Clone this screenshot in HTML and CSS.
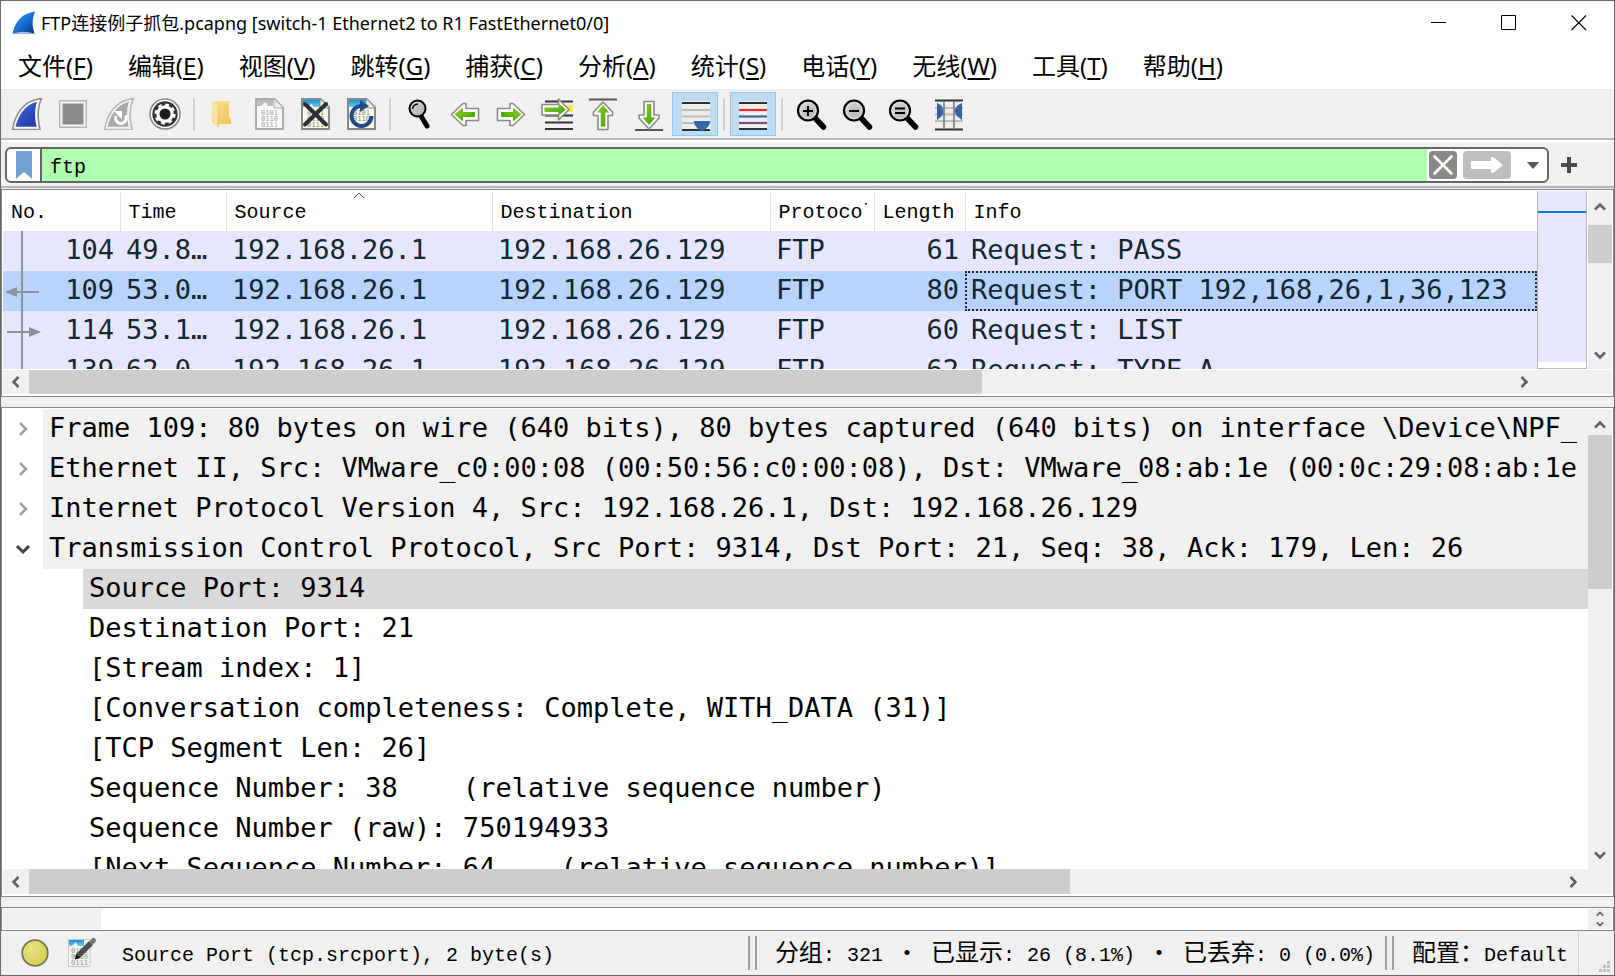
FILE: index.html
```html
<!DOCTYPE html>
<html lang="zh-CN">
<head>
<meta charset="utf-8">
<title>FTP连接例子抓包.pcapng</title>
<link rel="stylesheet" href="styles.css">
</head>
<body>
<svg class="defs" width="0" height="0" aria-hidden="true">
  <defs>
    <linearGradient id="gFin" x1="0" y1="0" x2="1" y2="1"><stop offset="0" stop-color="#4a6ee0"/><stop offset=".6" stop-color="#2a48bf"/><stop offset="1" stop-color="#2439a8"/></linearGradient>
    <linearGradient id="gLogo" x1="0" y1="0" x2="1" y2="1"><stop offset="0" stop-color="#2fa0ee"/><stop offset=".5" stop-color="#1a73d6"/><stop offset="1" stop-color="#072a72"/></linearGradient>
    <linearGradient id="gGreen" x1="0" y1="0" x2="1" y2="1"><stop offset="0" stop-color="#8ad02c"/><stop offset="1" stop-color="#3f9c00"/></linearGradient>
    <linearGradient id="gFold" x1="0" y1="0" x2="1" y2="1"><stop offset="0" stop-color="#fbe49a"/><stop offset="1" stop-color="#efc258"/></linearGradient>
    <linearGradient id="gSky" x1="0" y1="0" x2="0" y2="1"><stop offset="0" stop-color="#1b93d8"/><stop offset="1" stop-color="#6fc4ee"/></linearGradient>
    <linearGradient id="gLens" x1="0" y1="0" x2="1" y2="1"><stop offset="0" stop-color="#d8d8d8"/><stop offset="1" stop-color="#b0b0b0"/></linearGradient>
    <radialGradient id="gLed" cx=".4" cy=".35" r=".8"><stop offset="0" stop-color="#e6e28a"/><stop offset="1" stop-color="#d2cf3c"/></radialGradient>
    <symbol id="fin" viewBox="0 0 32 32"><path d="M1.5 31.5C4 17 12 2.500 30.500.5 26.500 9 26 19 29 31.500Z"/></symbol>
    <symbol id="arrow" viewBox="0 0 32 32">
      <path d="M2.500 16.500 14 5.500H17V10.500H29.500V22.500H17V27.500H14Z" fill="#fff" stroke="#888a85" stroke-width="1.600" stroke-linejoin="round"/>
      <path d="M5.500 16.500 14 9.500V14H26V19H14V23.500Z" fill="url(#gGreen)"/>
    </symbol>
    <symbol id="lens" viewBox="0 0 32 32">
      <path d="M21 21 28.500 29" stroke="#000" stroke-width="5.500" stroke-linecap="round"/>
      <circle cx="13" cy="12.500" r="10" fill="url(#gLens)" stroke="#000" stroke-width="2.200"/>
      <circle cx="13" cy="12.500" r="8" fill="none" stroke="#e4e4e4" stroke-width="1"/>
    </symbol>
    <symbol id="up" viewBox="0 0 16 16"><path d="M3 10.500 8 5.500 13 10.500" fill="none" stroke="#606060" stroke-width="2.600"/></symbol>
    <symbol id="down" viewBox="0 0 16 16"><path d="M3 5.500 8 10.500 13 5.500" fill="none" stroke="#606060" stroke-width="2.600"/></symbol>
    <symbol id="left" viewBox="0 0 16 16"><path d="M10.500 3 5.500 8 10.500 13" fill="none" stroke="#606060" stroke-width="2.600"/></symbol>
    <symbol id="right" viewBox="0 0 16 16"><path d="M5.500 3 10.500 8 5.500 13" fill="none" stroke="#606060" stroke-width="2.600"/></symbol>
  </defs>
</svg>

<header class="titlebar">
  <svg class="logo" viewBox="0 0 24 24" aria-hidden="true"><path d="M.5 22.500C3 11 10 2 23 .5 20 8 20 15 22.500 22.500Z" fill="url(#gLogo)"/><path d="M1 22.500Q12 19 22 22.500Z" fill="#a8c4ee"/></svg>
  <h1 class="title">FTP连接例子抓包.pcapng [switch-1 Ethernet2 to R1 FastEthernet0/0]</h1>
  <div class="winbtns">
    <button aria-label="最小化"><svg viewBox="0 0 16 16"><path d="M0 7.500H15" stroke="#000" stroke-width="1"/></svg></button>
    <button aria-label="最大化"><svg viewBox="0 0 16 16"><path d="M.5.5H14.500V14.500H.5Z" fill="none" stroke="#000"/></svg></button>
    <button aria-label="关闭"><svg viewBox="0 0 16 16"><path d="M.5.5 15 15M15 .5.5 15" stroke="#000" stroke-width="1.100"/></svg></button>
  </div>
</header>

<nav class="menubar">
  <button>文件(<u>F</u>)</button><button>编辑(<u>E</u>)</button><button>视图(<u>V</u>)</button><button>跳转(<u>G</u>)</button><button>捕获(<u>C</u>)</button><button>分析(<u>A</u>)</button><button>统计(<u>S</u>)</button><button>电话(<u>Y</u>)</button><button>无线(<u>W</u>)</button><button>工具(<u>T</u>)</button><button>帮助(<u>H</u>)</button>
</nav>

<div class="toolbar">
  <button aria-label="开始捕获"><svg viewBox="0 0 32 32"><use href="#fin" fill="#fff" stroke="#8c8c8c" stroke-width="1.600"/><path d="M4.500 28.800C7 18 14 6.500 26 3.800 23.500 11 23.500 20 25.700 28.800Z" fill="url(#gFin)"/></svg></button>
  <button aria-label="停止捕获"><svg viewBox="0 0 32 32"><path d="M2.700 2.700H29.300V29.300H2.700Z" fill="#f6f6f6" stroke="#b4b4b4" stroke-width="1.400"/><path d="M5.500 5.500H26.500V26.500H5.500Z" fill="#8c8c8c"/></svg></button>
  <button aria-label="重新开始捕获"><svg viewBox="0 0 32 32"><use href="#fin" fill="#f4f4f4" stroke="#b8b8b8" stroke-width="1.600"/><path d="M4.500 28.800C7 18 14 6.500 26 3.800 23.500 11 23.500 20 25.700 28.800Z" fill="#a9a9a9"/><path d="M13 18A5.300 5.300 0 1 0 22.500 17.500" fill="none" stroke="#fff" stroke-width="3"/><path d="M11 13H19V21L15.500 18Z" fill="#fff"/></svg></button>
  <button aria-label="捕获选项"><svg viewBox="0 0 32 32"><circle cx="16" cy="16" r="15" fill="#fff" stroke="#8a8a8a" stroke-width="1.600"/><circle cx="16" cy="16" r="12.700" fill="#333"/><circle cx="16" cy="16" r="8.700" fill="#fff"/><circle cx="16" cy="16" r="9.200" fill="none" stroke="#fff" stroke-width="2.800" stroke-dasharray="3.600 3.625"/><circle cx="16" cy="16" r="5.500" fill="#1c1c1c"/></svg></button>
  <span class="sep"></span>
  <button aria-label="打开"><svg viewBox="0 0 32 32"><path d="M5 3H22V17.500L24 22V26H11L5 25Z" fill="url(#gFold)"/><path d="M5 3 11.500 7.500V29.500L6 26Z" fill="#fbe29c"/><path d="M11.500 7.500V29" stroke="#e2b95a" stroke-width=".6"/></svg></button>
  <button aria-label="保存"><svg viewBox="0 0 32 32"><path d="M3 1H21.500L30 9.500V31H3Z" fill="#fafafa" stroke="#acacac" stroke-width="2"/><path d="M4 2H20V8H15L12.500 4 8 8H4Z" fill="#bcbcbc"/><path d="M21 1V10H30" fill="#eee" stroke="#acacac"/><g class="bits" fill="#a8a8a8"><text x="8" y="17">0101</text><text x="8" y="23">0110</text><text x="8" y="29">0111</text></g></svg></button>
  <button aria-label="关闭文件"><svg viewBox="0 0 32 32"><path d="M3 1H21.500L30 9.500V31H3Z" fill="#fdfbe9" stroke="#888a85" stroke-width="2"/><path d="M4 2H21V9H15L12.500 6 8 9H4Z" fill="url(#gSky)"/><path d="M21 1V10H30" fill="#eee" stroke="#888a85"/><g class="bits" fill="#8c8c88"><text x="8" y="17">0101</text><text x="8" y="23">0110</text><text x="8" y="29">0111</text></g><path d="M6 6 27 26.500M27 6 6 26.500" stroke="#2a3033" stroke-width="4" stroke-linecap="round"/></svg></button>
  <button aria-label="重新载入"><svg viewBox="0 0 32 32"><path d="M3 1H21.500L30 9.500V31H3Z" fill="#fdfbe9" stroke="#888a85" stroke-width="2"/><path d="M4 2H21V9H4Z" fill="url(#gSky)"/><path d="M21 1V10H30" fill="#eee" stroke="#888a85"/><g class="bits" fill="#8c8c88"><text x="8" y="17">0101</text><text x="8" y="23">0110</text></g><path d="M17 8A10 10 0 1 0 26.500 18" fill="none" stroke="#204a87" stroke-width="4"/><path d="M15 2 24 8 15 14Z" fill="#204a87"/></svg></button>
  <span class="sep"></span>
  <button aria-label="查找分组"><svg viewBox="0 0 32 32"><path d="M18 18 24 28" stroke="#000" stroke-width="5" stroke-linecap="round"/><circle cx="14.500" cy="10.500" r="8" fill="url(#gLens)" stroke="#000" stroke-width="2"/><path d="M9.500 11Q10 6.500 15 6" fill="none" stroke="#000" stroke-width="1.300"/></svg></button>
  <button aria-label="后退"><svg viewBox="0 0 32 32"><use href="#arrow"/></svg></button>
  <button aria-label="前进"><svg viewBox="0 0 32 32"><use href="#arrow" transform="translate(32 0) scale(-1 1)"/></svg></button>
  <button aria-label="转到分组"><svg viewBox="0 0 32 32"><path d="M4 3.500H32M4 24.500H32M4 31H32M4 17.500H32" stroke="#2e3436" stroke-width="2.200"/><path d="M24 7H32V14H24Z" fill="#fce94f"/><path d="M28 11.500 17.500 1V6.500H1V17H17.500V22Z" fill="#fff" stroke="#888a85" stroke-width="1.600" stroke-linejoin="round"/><path d="M25 11.500 17.500 5.500V9.500H3.500V14H17.500V17.500Z" fill="url(#gGreen)"/></svg></button>
  <button aria-label="首个分组"><svg viewBox="0 0 32 32"><path d="M2 1.500H30" stroke="#555753" stroke-width="2"/><path d="M16 4 25.500 14V17.500H21V31.500H11V17.500H6.500V14Z" fill="#fff" stroke="#888a85" stroke-width="1.600" stroke-linejoin="round"/><path d="M16 7 22 14.500H18.300V28.500H13.700V14.500H10Z" fill="url(#gGreen)"/></svg></button>
  <button aria-label="最新分组"><svg viewBox="0 0 32 32"><path d="M2 32H30" stroke="#555753" stroke-width="2"/><path d="M16 31 26 20V17H21V3.500H11V17H6V20Z" fill="#fff" stroke="#888a85" stroke-width="1.600" stroke-linejoin="round"/><path d="M16 27 22.500 19.500H18.300V6H13.700V19.500H9.500Z" fill="url(#gGreen)"/></svg></button>
  <button class="on" aria-label="自动滚动" aria-pressed="true"><svg viewBox="0 0 32 32"><path d="M3 3H31V33H3Z" fill="#eeeeec"/><path d="M3 5H31M3 32H31" stroke="#2e3436" stroke-width="2.200"/><path d="M3 12H31M3 18.500H31M3 25H31" stroke="#babdb6" stroke-width="2"/><path d="M15 23H31C31 27 28 31 23 33 18 31 15 27 15 23Z" fill="#3465a4"/></svg></button>
  <span class="sep"></span>
  <button class="on" aria-label="着色" aria-pressed="true"><svg viewBox="0 0 32 32"><path d="M2 3H30V32H2Z" fill="#eeeeec"/><path d="M2 5H30M2 31H30" stroke="#2e3436" stroke-width="2.200"/><path d="M2 12H30" stroke="#ef2929" stroke-width="2.200"/><path d="M2 18.500H30" stroke="#3465a4" stroke-width="2.200"/><path d="M2 25H30" stroke="#75507b" stroke-width="2.200"/></svg></button>
  <span class="sep"></span>
  <button aria-label="放大"><svg viewBox="0 0 32 32"><use href="#lens"/><path d="M8 13H18M13 8V18" stroke="#000" stroke-width="2"/></svg></button>
  <button aria-label="缩小"><svg viewBox="0 0 32 32"><use href="#lens"/><path d="M8 13H18" stroke="#000" stroke-width="2"/></svg></button>
  <button aria-label="正常大小"><svg viewBox="0 0 32 32"><use href="#lens"/><path d="M8 10.500H18M8 15H18" stroke="#000" stroke-width="2"/></svg></button>
  <button aria-label="调整列宽"><svg viewBox="0 0 32 32"><path d="M2 3H30V31H2Z" fill="#eeeeec"/><path d="M2 10H30M2 16.500H30M2 23H30" stroke="#babdb6" stroke-width="2"/><path d="M2 2.500H30M2 31.500H30" stroke="#2e3436" stroke-width="2.200"/><path d="M11 3V31M21 3V31" stroke="#777a75" stroke-width="1.600"/><path d="M4 5 8.500 7.500Q12 13 8.500 18.500L4 22Z M29 5 24.500 7.500Q19 13 24.500 18.500L29 22Z" fill="#3465a4"/></svg></button>
</div>

<div class="filterbar">
  <div class="filter">
    <button class="mark" aria-label="书签"><svg viewBox="0 0 16 28"><path d="M0 1Q0 0 1 0H15Q16 0 16 1V28L8 21 0 28Z" fill="#729fcf"/></svg></button>
    <input class="ftext" type="text" value="ftp" aria-label="显示过滤器">
    <button class="clear" aria-label="清除"><svg viewBox="0 0 28 28"><path d="M5.500 5.500 22.500 22.500M22.500 5.500 5.500 22.500" stroke="#fff" stroke-width="2.600" stroke-linecap="round"/></svg></button>
    <button class="apply" aria-label="应用"><svg viewBox="0 0 48 28"><path d="M9 10H28V6L31 6.500 40 14 31 21.500 28 22V18H9Q8 18 8 17V11Q8 10 9 10Z" fill="#fff"/></svg></button>
    <button class="drop" aria-label="最近使用"><svg viewBox="0 0 14 8"><path d="M0 0H14L7 8Z" fill="#555753"/></svg></button>
  </div>
  <button class="plus" aria-label="添加"><svg viewBox="0 0 16 16"><path d="M0 8H16M8 0V16" stroke="#4a4a4a" stroke-width="4"/></svg></button>
</div>

<main class="panes">
  <section class="pane packets">
    <div class="body">
      <div class="listwrap">
        <table class="list">
          <colgroup><col class="c1"><col class="c2"><col class="c3"><col class="c4"><col class="c5"><col class="c6"><col></colgroup>
          <thead><tr><th>No.</th><th>Time</th><th class="sorted">Source<svg class="caret" viewBox="0 0 12 7"><path d="M1 6 6 1 11 6" fill="none" stroke="#555"/></svg></th><th>Destination</th><th><span class="cut">Protocol</span></th><th>Length</th><th>Info</th></tr></thead>
          <tbody>
            <tr><td class="num">104</td><td>49.8…</td><td>192.168.26.1</td><td>192.168.26.129</td><td>FTP</td><td class="num">61</td><td>Request: PASS</td></tr>
            <tr class="cur"><td class="num">109<svg class="dir" viewBox="0 0 36 12"><path d="M0 6 12 1V11Z" fill="#8a9499"/><path d="M10 6H34" stroke="#8a9499" stroke-width="2"/></svg></td><td>53.0…</td><td>192.168.26.1</td><td>192.168.26.129</td><td>FTP</td><td class="num">80</td><td class="focus">Request: PORT 192,168,26,1,36,123</td></tr>
            <tr><td class="num">114<svg class="dir" viewBox="0 0 36 12"><path d="M36 6 24 1V11Z" fill="#8a9499"/><path d="M2 6H26" stroke="#8a9499" stroke-width="2"/></svg></td><td>53.1…</td><td>192.168.26.1</td><td>192.168.26.129</td><td>FTP</td><td class="num">60</td><td>Request: LIST</td></tr>
            <tr><td class="num">139</td><td>62.0…</td><td>192.168.26.1</td><td>192.168.26.129</td><td>FTP</td><td class="num">62</td><td>Request: TYPE A</td></tr>
          </tbody>
        </table>
        <span class="flow"></span>
      </div>
      <div class="minimap"></div>
      <div class="vscroll">
        <button aria-label="向上"><svg><use href="#up"/></svg></button><span class="thumb t1"></span><button class="end" aria-label="向下"><svg><use href="#down"/></svg></button>
      </div>
    </div>
    <div class="hscroll h1">
      <button aria-label="向左"><svg><use href="#left"/></svg></button><span class="track"><span class="thumb"></span></span><button aria-label="向右"><svg><use href="#right"/></svg></button>
    </div>
  </section>

  <section class="pane details">
    <div class="body">
      <ul class="tree">
        <li class="top"><button aria-label="展开"><svg viewBox="0 0 16 16"><path d="M5 2 11 8 5 14" fill="none" stroke="#a0a0a0" stroke-width="2.600"/></svg></button><span>Frame 109: 80 bytes on wire (640 bits), 80 bytes captured (640 bits) on interface \Device\NPF_</span></li>
        <li class="top"><button aria-label="展开"><svg viewBox="0 0 16 16"><path d="M5 2 11 8 5 14" fill="none" stroke="#a0a0a0" stroke-width="2.600"/></svg></button><span>Ethernet II, Src: VMware_c0:00:08 (00:50:56:c0:00:08), Dst: VMware_08:ab:1e (00:0c:29:08:ab:1e</span></li>
        <li class="top"><button aria-label="展开"><svg viewBox="0 0 16 16"><path d="M5 2 11 8 5 14" fill="none" stroke="#a0a0a0" stroke-width="2.600"/></svg></button><span>Internet Protocol Version 4, Src: 192.168.26.1, Dst: 192.168.26.129</span></li>
        <li class="top"><button aria-label="折叠"><svg viewBox="0 0 16 16"><path d="M2 5 8 11 14 5" fill="none" stroke="#404040" stroke-width="3"/></svg></button><span>Transmission Control Protocol, Src Port: 9314, Dst Port: 21, Seq: 38, Ack: 179, Len: 26</span></li>
        <li class="kid sel"><span>Source Port: 9314</span></li>
        <li class="kid"><span>Destination Port: 21</span></li>
        <li class="kid"><span>[Stream index: 1]</span></li>
        <li class="kid"><span>[Conversation completeness: Complete, WITH_DATA (31)]</span></li>
        <li class="kid"><span>[TCP Segment Len: 26]</span></li>
        <li class="kid"><span>Sequence Number: 38    (relative sequence number)</span></li>
        <li class="kid"><span>Sequence Number (raw): 750194933</span></li>
        <li class="kid"><span>[Next Sequence Number: 64    (relative sequence number)]</span></li>
      </ul>
      <div class="vscroll">
        <button aria-label="向上"><svg><use href="#up"/></svg></button><span class="thumb t2"></span><button class="end" aria-label="向下"><svg><use href="#down"/></svg></button>
      </div>
    </div>
    <div class="hscroll h2">
      <button aria-label="向左"><svg><use href="#left"/></svg></button><span class="track"><span class="thumb"></span></span><button aria-label="向右"><svg><use href="#right"/></svg></button>
    </div>
  </section>

  <section class="pane bytes">
    <div class="offset"></div>
    <div class="mini"><button aria-label="向上"><svg><use href="#up"/></svg></button><button aria-label="向下"><svg><use href="#down"/></svg></button></div>
  </section>
</main>

<footer class="status">
  <button class="led" aria-label="专家信息"><svg viewBox="0 0 28 28"><circle cx="14" cy="14" r="12.800" fill="url(#gLed)" stroke="#75745a" stroke-width="1.800"/></svg></button>
  <button class="note" aria-label="注释"><svg viewBox="0 0 28 28"><path d="M.5.500H22V27.500H.5Z" fill="#f4f4ee" stroke="#bbb" stroke-width=".8"/><path d="M1 1H16V7H10L8 3 4 7H1Z" fill="url(#gSky)"/><g class="bits" fill="#999"><text x="3" y="14">0101</text><text x="3" y="20">0110</text><text x="3" y="26">0111</text></g><path d="M10 17 23 4" stroke="#4b504e" stroke-width="5.500"/><path d="M24 3 25.500 1.500" stroke="#777" stroke-width="5" stroke-linecap="round"/><path d="M7 20.500 8 15 12.500 19Z" fill="#111"/></svg></button>
  <span class="field">Source Port (tcp.srcport), 2 byte(s)</span>
  <span class="grip"></span>
  <span class="counts"><b>分组</b>: 321 <b class="dot">•</b> <b>已显示</b>: 26 (8.1%) <b class="dot">•</b> <b>已丢弃</b>: 0 (0.0%)</span>
  <span class="grip"></span>
  <span class="profile"><b>配置：</b>Default</span>
  <svg class="size" viewBox="0 0 12 12" aria-hidden="true"><path d="M8 0H11V3H8ZM4 4H7V7H4ZM8 4H11V7H8ZM0 8H3V11H0ZM4 8H7V11H4ZM8 8H11V11H8Z" fill="#bfbfbf"/></svg>
</footer>
</body>
</html>
```
FILE: styles.css
```css
* { box-sizing: border-box; }
html, body { height: 100%; }
body {
  margin: 0;
  display: flex;
  flex-direction: column;
  overflow: hidden;
  border: 1px solid #69676a;
  background: #f0f0f0;
  color: #000;
  font-family: "Noto Sans", "Noto Sans CJK SC", sans-serif;
}
button {
  margin: 0;
  padding: 0;
  border: 0;
  background: none;
  color: inherit;
  font: inherit;
  display: flex;
  align-items: center;
  justify-content: center;
}
svg { display: block; flex: none; }
.defs { position: absolute; }
.bits { font: 7px "DejaVu Sans Mono", monospace; }

.titlebar { flex: none; display: flex; align-items: center; height: 43px; padding-left: 11px; background: #fff; }
.logo { width: 24px; height: 24px; }
.title { flex: 1; margin: 0 0 0 5px; font-size: 18px; font-weight: 400; line-height: 24px; white-space: nowrap; }
.winbtns { display: flex; }
.winbtns button { width: 70px; height: 43px; }
.winbtns svg { width: 16px; height: 16px; }

.menubar { flex: none; display: flex; gap: 35px; height: 46px; padding: 0 17px; background: #fff; border-bottom: 1px solid #ececec; font-size: 24px; line-height: 44px; white-space: nowrap; }
.menubar button { height: 44px; }
.menubar u { text-underline-offset: 3px; text-decoration-thickness: 2px; }

.toolbar { flex: none; display: flex; align-items: center; height: 50px; padding-left: 3px; border-bottom: 2px solid #b6b6b6; }
.toolbar button { width: 46px; height: 44px; }
.toolbar svg { width: 32px; height: 32px; overflow: visible; }
.toolbar .on { background: #c0dcf3; border: 1px solid #90c8f6; }
.sep { width: 2px; height: 33px; margin: 0 5px; background: #d0d0d0; }

.filterbar { flex: none; display: flex; align-items: center; height: 48px; padding: 2px 37px 0 4px; gap: 12px; border-top: 2px solid #fff; border-bottom: 2px solid #b6b6b6; }
.filter { flex: 1; display: flex; align-items: center; height: 36px; background: #fff; border: 2px solid #666; border-radius: 6px; overflow: hidden; }
.mark { width: 35px; height: 32px; border-right: 2px solid #666; }
.mark svg { width: 16px; height: 28px; }
.ftext { flex: 1; min-width: 0; height: 32px; padding: 4px 8px 0; border: 0; outline: 0; background: #afffaf; font: 20px "Liberation Mono", monospace; color: #000; }
.clear { width: 28px; height: 28px; margin: 0 6px 0 2px; background: #888a85; border-radius: 4px; }
.clear svg { width: 28px; height: 28px; }
.apply { width: 48px; height: 28px; background: #bdbdbd; border-radius: 4px; }
.apply svg { width: 48px; height: 28px; }
.drop { width: 36px; height: 32px; padding-left: 8px; }
.drop svg { width: 14px; height: 7px; }
.plus svg { width: 16px; height: 16px; }

.panes { flex: 1; min-height: 0; display: flex; flex-direction: column; gap: 10px; padding-top: 1px; }
.pane { display: flex; flex-direction: column; border: 1px solid #828790; padding: 1px; background: #fff; overflow: hidden; }
.packets { flex: 0 0 208px; }
.details { flex: 1; min-height: 0; }
.body { flex: 1; min-height: 0; display: flex; }
.list, .tree { font-family: "DejaVu Sans Mono", monospace; font-size: 27px; line-height: 38px; }

.listwrap { flex: 1; min-width: 0; position: relative; overflow: hidden; }
.list { width: 100%; table-layout: fixed; border-collapse: collapse; color: #12272e; }
.c1 { width: 117px; } .c2 { width: 106px; } .c3 { width: 266px; } .c4 { width: 278px; } .c5 { width: 104px; } .c6 { width: 91px; }
.list th { height: 40px; padding: 4px 0 0 8px; border-right: 1px solid #e2e2e2; background: #fff; color: #000; font: 20px/36px "Liberation Mono", monospace; text-align: left; }
.list th:last-child { border-right: 0; }
.sorted { position: relative; }
.caret { position: absolute; top: 1px; left: 50%; width: 12px; height: 7px; margin-left: -6px; }
.cut { display: block; width: 88px; overflow: hidden; }
.list td { position: relative; height: 40px; padding: 0 0 2px 6px; background: #e7e6ff; white-space: nowrap; overflow: hidden; }
.list .num { padding: 0 6px 2px 0; text-align: right; }
.list .cur td { background: #b9d3ff; }
.list .focus { outline: 2px dotted #12272e; outline-offset: -2px; }
.dir { position: absolute; left: 2px; top: 15px; z-index: 2; width: 36px; height: 12px; }
.flow { position: absolute; left: 18px; top: 40px; bottom: 0; width: 2px; background: #8a9499; }

.minimap { width: 50px; margin-right: 1px; border: 1px solid #b4b4b4; border-top: 0; background: linear-gradient(#e7e6ff 20px, #0078d7 20px, #0078d7 22px, #e7e6ff 22px, #e7e6ff 171px, #fff 171px); }
.vscroll { width: 24px; display: flex; flex-direction: column; background: #f0f0f0; }
.vscroll button { height: 32px; }
.vscroll .end { margin-top: auto; height: 28px; }
.vscroll svg, .hscroll svg { width: 16px; height: 16px; }
.thumb { background: #cdcdcd; }
.t1 { height: 38px; margin-top: 2px; }
.t2 { height: 154px; margin: -6px 0 0; }
.hscroll { flex: none; display: flex; height: 26px; background: #f0f0f0; border-bottom: 1px solid #fff; }
.hscroll button { width: 26px; }
.hscroll .track { flex: 1; display: flex; }
.h1 { padding-right: 75px; border-top: 1px solid #fff; }
.h1 .thumb { width: 64.3%; }
.h2 { padding-right: 26px; }
.h2 .thumb { width: 68%; }

.tree { flex: 1; min-width: 0; margin: 0; padding: 0; list-style: none; overflow: hidden; }
.tree li { display: flex; height: 40px; }
.tree button { width: 40px; height: 40px; }
.tree button svg { width: 16px; height: 16px; }
.tree li span { flex: 1; min-width: 0; padding-left: 6px; overflow: hidden; white-space: pre; }
.top span { background: #f0f0f0; }
.kid { padding-left: 80px; }
.sel span { background: #d9d9d9; }

.bytes { flex: none; flex-direction: row; justify-content: space-between; height: 24px; }
.offset { width: 98px; background: #f0f0f0; }
.mini { width: 24px; background: #f0f0f0; display: flex; flex-direction: column; align-items: center; }
.mini svg { width: 10px; height: 10px; }

.status { flex: none; display: flex; align-items: center; height: 44px; padding-left: 20px; font: 20px/38px "Liberation Mono", "Noto Sans CJK SC", monospace; white-space: nowrap; }
.status b { font-size: 24px; font-weight: 400; font-family: "Noto Sans CJK SC", sans-serif; line-height: 24px; }
.status .dot { display: inline-block; width: 24px; text-align: center; }
.led svg { width: 28px; height: 28px; }
.note { margin: 0 26px 0 19px; }
.note svg { width: 28px; height: 28px; overflow: visible; }
.field { flex: 1; padding-top: 6px; }
.grip { width: 9px; height: 34px; border: solid #a0a0a0; border-width: 0 2px; }
.counts { padding: 6px 10px 0 18px; }
.profile { padding: 6px 10px 0 18px; border-right: 1px solid #d0d0d0; }
.size { align-self: flex-end; width: 12px; height: 12px; margin: 0 3px 2px 20px; }
```
